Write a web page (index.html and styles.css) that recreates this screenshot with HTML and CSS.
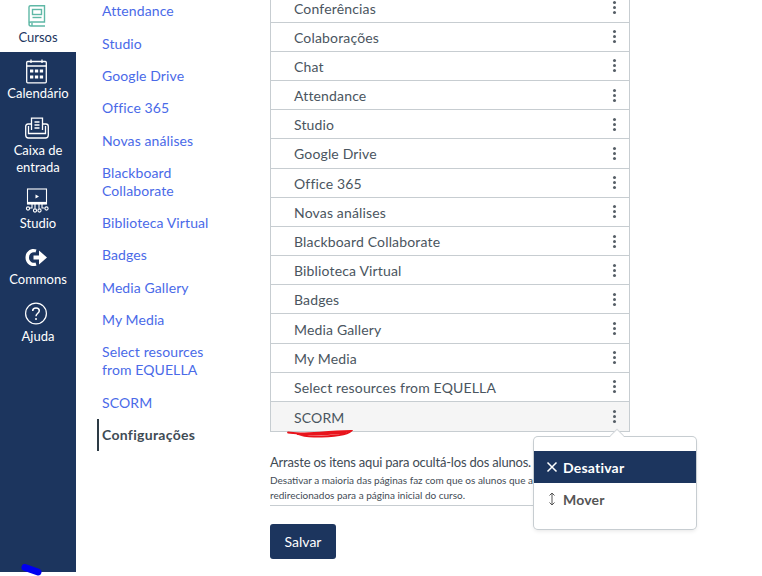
FILE: index.html
```html
<!DOCTYPE html>
<html lang="pt">
<head>
    <meta charset="UTF-8">
    <meta name="viewport" content="width=device-width, initial-scale=1.0">
    <title>Configurações</title>
    <link rel="stylesheet" href="styles.css">
</head>
<body>
    <div class="app">
        <nav class="global-nav">
            <a class="global-item global-active">
                <svg class="global-icon" viewBox="0 0 26 26" width="26" height="26" fill="none" stroke="#5fb8a6" stroke-width="1.4">
                    <path d="M5 21V5C5 4.200 5.600 3.700 6.500 3.700H20.500V20H7C5.700 20 5 20.700 5 22C5 23.300 5.700 24 7 24H21"/>
                    <path d="M8 20.500V24"/>
                    <rect x="8.500" y="7.500" width="9" height="5"/>
                    <path d="M8.500 15.500H17.500"/>
                </svg>
                <span>Cursos</span>
            </a>
            <a class="global-item">
                <svg class="global-icon" viewBox="0 0 26 26" width="26" height="26" fill="none" stroke="#fff" stroke-width="1.300">
                    <rect x="2.700" y="3.500" width="19.600" height="21.300" rx="1"/>
                    <path d="M2.700 8H22.300M7 1.500V5M18 1.500V5"/>
                    <g fill="#fff" stroke="none">
                        <rect x="6" y="11.500" width="3.300" height="3"/><rect x="10.900" y="11.500" width="3.300" height="3"/><rect x="15.800" y="11.500" width="3.300" height="3"/>
                        <rect x="6" y="17.500" width="3.300" height="3"/><rect x="10.900" y="17.500" width="3.300" height="3"/><rect x="15.800" y="17.500" width="3.300" height="3"/>
                    </g>
                </svg>
                <span>Calendário</span>
            </a>
            <a class="global-item global-inbox">
                <svg class="global-icon" viewBox="0 0 26 26" width="26" height="26" fill="none" stroke="#fff" stroke-width="1.300">
                    <path d="M7.500 15V3.200H18.500V15"/>
                    <path d="M10.500 7H15.500M10.500 10H15.500M10.500 13H15.500"/>
                    <path d="M7.500 9H4C2.500 9 1.700 10 1.700 11.500V20C1.700 22 2.700 23 4.500 23H21.500C23.300 23 24.300 22 24.300 20V11.500C24.300 10 23.500 9 22 9H18.500"/>
                    <path d="M4.500 11V18.500H21.500V11"/>
                </svg>
                <span>Caixa de<br>entrada</span>
            </a>
            <a class="global-item">
                <svg class="global-icon" viewBox="0 0 26 26" width="26" height="26" fill="none" stroke="#fff" stroke-width="1.100">
                    <rect x="3.500" y="1" width="19" height="15"/>
                    <path d="M3.500 15H22.500" stroke-width="2.200"/>
                    <path d="M11.500 6.500L15 8.500L11.500 10.500Z" fill="#fff" stroke="none"/>
                    <path d="M8 16V20H5.500M11 16V20.500M15 16V20.500M18 16V20H20.500"/>
                    <circle cx="4" cy="20.500" r="1.600"/><circle cx="11" cy="22.500" r="1.600"/><circle cx="15.500" cy="22.500" r="1.600"/><circle cx="22.500" cy="20.500" r="1.600"/>
                </svg>
                <span>Studio</span>
            </a>
            <a class="global-item">
                <svg class="global-icon" viewBox="0 0 26 26" width="26" height="26" fill="#fff">
                    <path d="M12.500 5.500C7.500 3.500 1.500 7 1.500 13.500C1.500 20 7.500 23.500 12.500 21.500L11.500 18.500C8.300 19.500 5 17.500 5 13.500C5 9.500 8.300 7.500 11.500 8.500Z"/>
                    <path d="M9.500 11.500H15V6.500L23 13.500L15 20.500V15.500H9.500Z"/>
                </svg>
                <span>Commons</span>
            </a>
            <a class="global-item">
                <svg class="global-icon" viewBox="0 0 26 26" width="26" height="26" fill="none" stroke="#fff" stroke-width="1.200">
                    <circle cx="12" cy="12.500" r="10.400"/>
                    <path d="M8.700 10C8.700 8 10.200 7 12 7C13.900 7 15.300 8.100 15.300 9.800C15.300 12.300 12 12.300 12 15.300" stroke-width="1.500"/>
                    <circle cx="12" cy="18" r="1" fill="#fff" stroke="none"/>
                </svg>
                <span>Ajuda</span>
            </a>
        </nav>

        <ul class="course-nav">
            <li><a>Attendance</a></li>
            <li><a>Studio</a></li>
            <li><a>Google Drive</a></li>
            <li><a>Office 365</a></li>
            <li><a>Novas análises</a></li>
            <li><a>Blackboard Collaborate</a></li>
            <li><a>Biblioteca Virtual</a></li>
            <li><a>Badges</a></li>
            <li><a>Media Gallery</a></li>
            <li><a>My Media</a></li>
            <li><a>Select resources from EQUELLA</a></li>
            <li><a>SCORM</a></li>
            <li class="course-active"><a>Configurações</a></li>
        </ul>

        <main class="settings">
            <ul class="tab-list">
                <li class="tab-row"><span>Conferências</span><i class="dots"></i></li>
                <li class="tab-row"><span>Colaborações</span><i class="dots"></i></li>
                <li class="tab-row"><span>Chat</span><i class="dots"></i></li>
                <li class="tab-row"><span>Attendance</span><i class="dots"></i></li>
                <li class="tab-row"><span>Studio</span><i class="dots"></i></li>
                <li class="tab-row"><span>Google Drive</span><i class="dots"></i></li>
                <li class="tab-row"><span>Office 365</span><i class="dots"></i></li>
                <li class="tab-row"><span>Novas análises</span><i class="dots"></i></li>
                <li class="tab-row"><span>Blackboard Collaborate</span><i class="dots"></i></li>
                <li class="tab-row"><span>Biblioteca Virtual</span><i class="dots"></i></li>
                <li class="tab-row"><span>Badges</span><i class="dots"></i></li>
                <li class="tab-row"><span>Media Gallery</span><i class="dots"></i></li>
                <li class="tab-row"><span>My Media</span><i class="dots"></i></li>
                <li class="tab-row"><span>Select resources from EQUELLA</span><i class="dots"></i></li>
                <li class="tab-row tab-row-hover"><span>SCORM</span><i class="dots"></i></li>
            </ul>
            <div class="hidden-note">
                <p class="note-title">Arraste os itens aqui para ocultá-los dos alunos.</p>
                <p class="note-small">Desativar a maioria das páginas faz com que os alunos que as<br>redirecionados para a página inicial do curso.</p>
            </div>
            <button class="save-button">Salvar</button>
        </main>

        <div class="popover">
            <div class="menu-item menu-active">
                <svg viewBox="0 0 12 12" width="12" height="12" fill="none" stroke="#fff" stroke-width="1.500"><path d="M1.500 1.500L10.500 10.500M10.500 1.500L1.500 10.500"/></svg>
                <span>Desativar</span>
            </div>
            <div class="menu-item">
                <svg viewBox="0 0 12 14" width="12" height="14" fill="none" stroke="#555" stroke-width="1"><path d="M6 1V13M3.500 3.500L6 1L8.500 3.500M3.500 10.500L6 13L8.500 10.500"/></svg>
                <span>Mover</span>
            </div>
        </div>

        <svg class="scribble-red" viewBox="0 0 66 10" width="66" height="10"><path d="M1 3.500C14 6 30 3 64 2C60 6 42 7.500 27 7.500C20 7.500 14 6.500 10 5C26 6 44 5 58 3.500" fill="none" stroke="#e8141c" stroke-width="1.800" stroke-linecap="round"/></svg>
        <svg class="scribble-blue" viewBox="0 0 22 12" width="22" height="12"><path d="M5 3.500L18 8" fill="none" stroke="#0000f0" stroke-width="7" stroke-linecap="round"/></svg>
    </div>
</body>
</html>
```

FILE: styles.css
```css
*{
    box-sizing: border-box;
}

html, body{
    margin: 0;
    height: 100%;
    overflow: hidden;
}

body{
    font-family: Lato, "Open Sans", sans-serif;
    color: #2d3b45;
    background-color: white;
}

ul{
    list-style: none;
    margin: 0;
    padding: 0;
}

.app{
    position: relative;
    display: flex;
    align-items: flex-start;
    width: 762px;
    height: 576px;
    overflow: hidden;
}

/* global nav */
.global-nav{
    flex: none;
    width: 76px;
    height: 572px;
    background-color: #1c355e;
    color: white;
    font-size: 13px;
    line-height: 17px;
    text-align: center;
}

.global-item{
    display: block;
    padding: 5.500px 0 7.100px;
}

.global-inbox{
    padding-top: 6.100px;
    padding-bottom: 6.500px;
}

.global-active{
    height: 52px;
    padding-top: 1.500px;
    padding-bottom: 0;
    background-color: white;
    color: #1c355e;
}

.global-icon{
    display: block;
    margin: 0 auto 1px;
    transform: translateX(-1px);
}

/* course nav */
.course-nav{
    flex: none;
    width: 194px;
    margin-left: 21px;
    padding-top: 2.200px;
    font-size: 14px;
    line-height: 18px;
    letter-spacing: 0.100px;
    color: #4a6ae8;
}

.course-nav li{
    margin-bottom: 14.340px;
    padding-left: 5px;
    padding-right: 70px;
}

.course-nav .course-active{
    margin-top: -7px;
    padding-top: 7px;
    padding-bottom: 7px;
    border-left: 2px solid #2d3b45;
    padding-left: 3px;
    padding-right: 0;
    font-weight: 700;
    letter-spacing: 0.300px;
    color: #3f4b55;
}

/* tabs */
.settings{
    flex: none;
    width: 360px;
    margin-left: -21px;
}

.tab-list{
    margin-top: -6.600px;
    border: 1px solid #c7cdd1;
    border-top: none;
}

.tab-row{
    display: flex;
    align-items: center;
    justify-content: space-between;
    height: 29.200px;
    padding-top: 1px;
    padding-left: 23px;
    padding-right: 13.500px;
    border-bottom: 1px solid #c7cdd1;
    font-size: 14px;
    letter-spacing: 0.160px;
    color: #4a5560;
}

.tab-row:last-child{
    border-bottom: none;
}

.tab-row-hover{
    background-color: #f5f5f5;
}

.dots{
    width: 3px;
    height: 3px;
    margin-top: -1px;
    border-radius: 50%;
    background-color: #555e66;
    box-shadow: 0 -5px 0 #555e66, 0 5px 0 #555e66;
}

.hidden-note{
    margin-top: 22px;
    padding-bottom: 3px;
    border-bottom: 1px solid #c7cdd1;
}

.note-title{
    margin: 0;
    font-size: 13px;
    line-height: 17px;
    letter-spacing: -0.200px;
    white-space: nowrap;
    color: #3f4b55;
}

.note-small{
    margin: 2px 0 0;
    font-size: 10px;
    line-height: 14.500px;
    color: #3f4b55;
}

.save-button{
    display: block;
    width: 66px;
    height: 35px;
    margin-top: 18px;
    border: none;
    border-radius: 3px;
    background-color: #1c355e;
    color: white;
    font-family: inherit;
    font-size: 14px;
}

/* popup menu over the list */
.popover{
    position: absolute;
    left: 534px;
    top: 437px;
    width: 162px;
    padding: 14px 0;
    border-radius: 4px;
    background-color: white;
    box-shadow: 0 0 0 1px #c7cdd1, 0 2px 4px rgba(0, 0, 0, 0.1);
    font-size: 14px;
    font-weight: 700;
    letter-spacing: 0.200px;
    color: #555;
}

.popover::before{
    content: "";
    position: absolute;
    left: 78px;
    top: -5px;
    width: 10px;
    height: 10px;
    transform: rotate(45deg);
    background-color: white;
    box-shadow: -1px -1px 0 #d5d9dc;
}

.menu-item{
    display: flex;
    align-items: center;
    gap: 5px;
    height: 32px;
    padding-left: 12px;
}

.menu-active{
    position: relative;
    background-color: #1c355e;
    color: white;
}

/* hand drawn marks */
.scribble-red{
    position: absolute;
    left: 287px;
    top: 429px;
}

.scribble-blue{
    position: absolute;
    left: 20px;
    top: 564px;
}
```
